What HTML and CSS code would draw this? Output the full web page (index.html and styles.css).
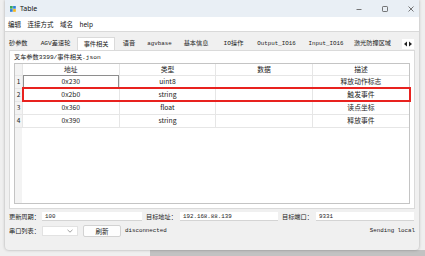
FILE: index.html
```html
<!DOCTYPE html>
<html lang="zh">
<head>
    <meta charset="UTF-8">
    <title>Table</title>
    <link rel="stylesheet" href="styles.css">
</head>
<body>
<div class="desk">
    <div class="back-strip"></div>
    <div class="window">
        <div class="titlebar">
            <svg class="app-icon" width="6" height="6" viewBox="0 0 6 6">
                <rect x="0" y="0" width="2.7" height="2.7" fill="#3aa757"/>
                <rect x="3.1" y="0" width="2.7" height="2.7" fill="#2f7fd6"/>
                <rect x="0" y="3.1" width="2.7" height="2.7" fill="#2f7fd6"/>
                <rect x="3.1" y="3.1" width="2.7" height="2.7" fill="#f3b51b"/>
            </svg>
            <span class="title">Table</span>
            <div class="controls">
                <svg width="8" height="8" viewBox="0 0 8 8"><path d="M1.5 4.5h5" stroke="#555" stroke-width="0.8"/></svg>
                <svg width="8" height="8" viewBox="0 0 8 8"><rect x="1.5" y="1.5" width="5" height="5" rx="0.7" fill="none" stroke="#555" stroke-width="0.8"/></svg>
                <svg width="8" height="8" viewBox="0 0 8 8"><path d="M1.5 1.5l5 5M6.5 1.5l-5 5" stroke="#555" stroke-width="0.8"/></svg>
            </div>
        </div>
        <div class="menubar">
            <span>编辑</span>
            <span>连接方式</span>
            <span>域名</span>
            <span>help</span>
        </div>
        <div class="body">
            <div class="tabs">
                <span class="tab t1">砂参数</span>
                <span class="tab t2">AGV差速轮</span>
                <span class="tab t3 active">事件相关</span>
                <span class="tab t4">语音</span>
                <span class="tab t5 latin">agvbase</span>
                <span class="tab t6">基本信息</span>
                <span class="tab t7">IO操作</span>
                <span class="tab t8 latin">Output_IO16</span>
                <span class="tab t9 latin">Input_IO16</span>
                <span class="tab t10">激光防撞区域</span>
                <span class="scroller">
                    <svg width="10" height="6" viewBox="0 0 10 6">
                        <path d="M4 0.5L1 3L4 5.5Z" fill="#222"/>
                        <path d="M6 0.5L9 3L6 5.5Z" fill="#222"/>
                    </svg>
                </span>
            </div>
            <div class="pane">
                <div class="path">叉车参数3399/事件相关.json</div>
                <div class="grid-wrap">
                    <table class="grid">
                        <tr class="head">
                            <th class="rh"></th>
                            <th>地址</th>
                            <th>类型</th>
                            <th>数据</th>
                            <th>描述</th>
                        </tr>
                        <tr>
                            <td class="rh">1</td>
                            <td class="focus">0x230</td>
                            <td>uint8</td>
                            <td></td>
                            <td>释放动作标志</td>
                        </tr>
                        <tr>
                            <td class="rh">2</td>
                            <td>0x2b0</td>
                            <td>string</td>
                            <td></td>
                            <td>触发事件</td>
                        </tr>
                        <tr>
                            <td class="rh">3</td>
                            <td>0x360</td>
                            <td>float</td>
                            <td></td>
                            <td>读点坐标</td>
                        </tr>
                        <tr>
                            <td class="rh">4</td>
                            <td>0x390</td>
                            <td>string</td>
                            <td></td>
                            <td>释放事件</td>
                        </tr>
                    </table>
                    <div class="mark"></div>
                </div>
            </div>
            <div class="form-row row-top">
                <label>更新周期：</label>
                <span class="field f-period">100</span>
                <label class="l-addr">目标地址：</label>
                <span class="field f-addr">192.168.88.139</span>
                <label class="l-port">目标端口：</label>
                <span class="field f-port">9331</span>
            </div>
            <div class="form-row row-bottom">
                <label>串口列表：</label>
                <span class="combo">
                    <svg width="6" height="4" viewBox="0 0 6 4"><path d="M0.5 0.8L3 3.2L5.5 0.8" fill="none" stroke="#777" stroke-width="0.7"/></svg>
                </span>
                <span class="btn">刷新</span>
                <span class="status">disconnected</span>
                <span class="sending">Sending local</span>
            </div>
        </div>
    </div>
</div>
</body>
</html>
```

FILE: styles.css
```css
html, body { margin: 0; padding: 0; }
body { width: 425px; height: 256px; overflow: hidden; background: #f2f2f2; font-family: "Noto Sans CJK SC", "Noto Sans", sans-serif; font-size: 7px; color: #111; }
.desk { position: relative; width: 425px; height: 256px; background: #efefef; }
.back-strip { position: absolute; left: 150px; right: 0; bottom: 0; height: 6px; background: #c2c2c2; }
.window { position: absolute; left: 5px; top: 0; width: 414px; height: 250px; background: #f0f0f0; border-radius: 0 0 4px 4px; box-shadow: 0 0 3px rgba(0,0,0,0.3); display: flex; flex-direction: column; overflow: hidden; }

.titlebar { height: 17px; background: #e9eff5; display: flex; align-items: center; padding-left: 5px; flex-shrink: 0; }
.app-icon { margin-right: 4px; }
.title { font-family: "Noto Sans", sans-serif; font-size: 7px; color: #111; }
.controls { margin-left: auto; display: flex; gap: 18px; padding-right: 4px; }

.menubar { height: 14px; background: #fff; display: flex; align-items: center; gap: 6.5px; padding-left: 3px; font-size: 6.5px; border-bottom: 1px solid #d9d9d9; flex-shrink: 0; }

.body { flex: 1; display: flex; flex-direction: column; padding: 0 4px; }
.tabs { height: 13px; margin-top: 5px; display: flex; align-items: flex-end; font-family: "Liberation Mono", "Noto Sans CJK SC", monospace; font-size: 6.2px; color: #222; white-space: nowrap; }
.tab { height: 12px; line-height: 12px; text-align: center; flex-shrink: 0; }
.tab.latin { font-size: 5.8px; }
.t1 { width: 25px; text-align: left; }
.t2 { width: 43px; }
.t3 { width: 38px; }
.t4 { width: 28px; }
.t5 { width: 33px; }
.t6 { width: 40px; }
.t7 { width: 35px; }
.t8 { width: 51px; }
.t9 { width: 48px; }
.t10 { width: 45px; }
.tab.active { background: #fff; border: 1px solid #dadada; border-bottom: none; height: 12px; line-height: 12px; box-sizing: content-box; width: 36px; font-family: "Noto Sans CJK SC", sans-serif; }
.scroller { margin-left: auto; margin-right: 1px; margin-bottom: 1px; width: 12px; height: 10px; background: #fff; display: flex; align-items: center; justify-content: center; }

.pane { height: 151px; background: #fff; border: 1px solid #dadada; padding: 2px 4px 4px 4px; }
.path { font-family: "Liberation Mono", "Noto Sans CJK SC", monospace; font-size: 6.2px; height: 9px; line-height: 9px; color: #222; }
.grid-wrap { position: relative; margin-top: 1px; height: 139px; border: 1px solid #c4c4c4; background: #fff linear-gradient(90deg, #f3f3f3 0, #f3f3f3 7px, #fff 7px); }
.grid { border-collapse: collapse; width: 100%; table-layout: fixed; font-size: 6.8px; color: #222; }
.grid th, .grid td { padding: 0; text-align: center; border: 1px solid #e6e6e6; white-space: nowrap; line-height: 1; }
.grid tr { height: 13px; }
.grid tr.head { height: 11px; }
.grid tr:first-child th { border-top: none; }
.grid th { font-weight: normal; background: #fff; color: #222; }
.grid th:last-child, .grid td:last-child { border-right: none; }
.grid .rh { width: 7px; background: #f3f3f3; border-left: none; color: #222; font-size: 6.5px; }
.grid .focus { outline: 1px solid #8e8e8e; outline-offset: -1px; }
.mark { position: absolute; left: 7px; right: -2px; top: 23px; height: 11px; border: 2px solid #e8221f; }

.form-row { display: flex; align-items: center; font-family: "Liberation Mono", "Noto Sans CJK SC", monospace; font-size: 6.2px; color: #222; white-space: nowrap; }
.row-top { margin-top: 3px; height: 9px; }
.row-bottom { margin-top: 3px; height: 13px; }
.form-row label { width: 33px; flex-shrink: 0; }
.form-row .l-addr, .form-row .l-port { width: 34px; }
.field { height: 9px; line-height: 9px; background: #fff; border-bottom: 1px solid #d4d4d4; padding-left: 3px; box-sizing: border-box; font-size: 5.8px; flex-shrink: 0; }
.f-period { width: 100px; margin-right: 4px; }
.f-addr { width: 98px; margin-right: 4px; }
.f-port { width: 98px; }
.combo { width: 36px; height: 10px; background: #fff; border: 1px solid #e2e2e2; display: flex; align-items: center; justify-content: flex-end; padding-right: 4px; box-sizing: border-box; }
.btn { width: 38px; height: 12px; line-height: 11px; text-align: center; margin-left: 5px; background: #fdfdfd; border: 1px solid #d2d2d2; border-radius: 2px; box-sizing: border-box; font-family: "Noto Sans CJK SC", sans-serif; font-size: 6.5px; }
.status { margin-left: 4px; font-size: 5.8px; }
.sending { margin-left: auto; font-size: 5.8px; }
```
